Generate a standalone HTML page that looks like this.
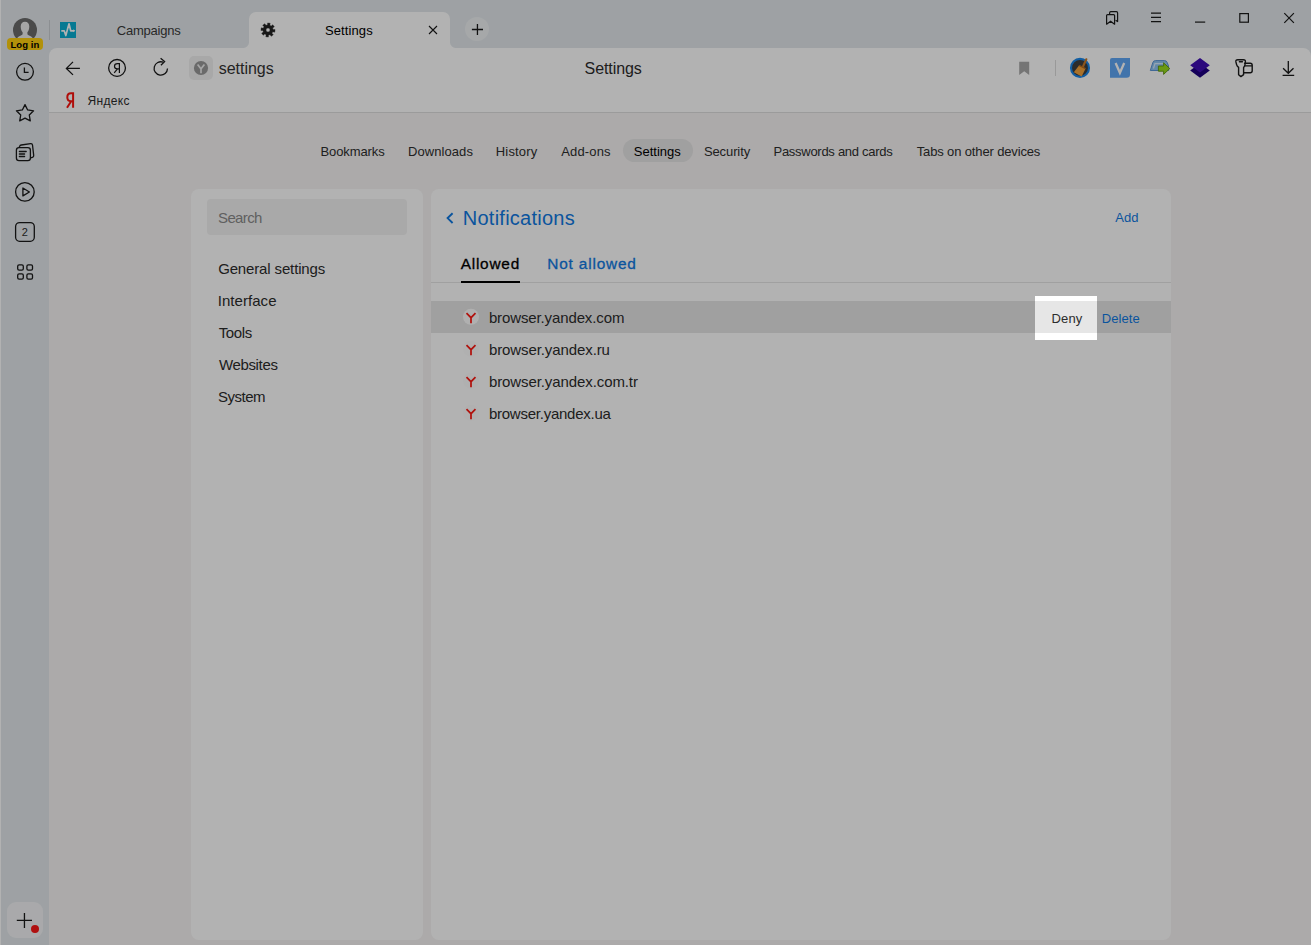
<!DOCTYPE html>
<html><head><meta charset="utf-8"><title>Settings</title>
<style>
*{box-sizing:border-box;margin:0;padding:0}
html,body{width:1311px;height:945px;overflow:hidden}
body{position:relative;background:#e2e7eb;font-family:"Liberation Sans",sans-serif;}
.a{position:absolute}
.t{position:absolute;white-space:nowrap;line-height:1;}
svg{position:absolute;overflow:visible}
#edge{left:0;top:0;width:1px;height:945px;background:#fff}
#toolbar{left:49px;top:48px;width:1262px;height:65px;background:#fff;border-radius:8px 8px 0 0;border-bottom:1px solid #dedede}
#page{left:49px;top:113px;width:1262px;height:832px;background:#f6f4f4}
#atab{left:249px;top:12px;width:201px;height:37px;background:#fff;border-radius:7px 7px 0 0}
.inv{width:6px;height:6px;top:42px}
#invl{left:243px;background:radial-gradient(circle at 0 0,rgba(255,255,255,0) 5.5px,#fff 6.5px)}
#invr{left:450px;background:radial-gradient(circle at 100% 0,rgba(255,255,255,0) 5.5px,#fff 6.5px)}
#tabsep{left:49px;top:20px;width:1px;height:20px;background:#c9cdd1}
#newtab{left:465px;top:17px;width:24px;height:24px;border-radius:12px;background:#eef1f3}
#lpanel{left:191px;top:189px;width:232px;height:751px;background:#fff;border-radius:8px}
#rpanel{left:431px;top:189px;width:740px;height:751px;background:#fff;border-radius:8px}
#search{left:207px;top:199px;width:200px;height:36px;background:#f2f2f2;border-radius:4px}
#pill{left:623px;top:139px;width:70px;height:23px;border-radius:12px;background:#e6e5e5}
#sepline{left:431px;top:282px;width:740px;height:1px;background:#e6e6e6}
#uline{left:461px;top:281px;width:59px;height:2px;background:#000}
#row1{left:431px;top:301px;width:740px;height:32px;background:#e6e6e6}
#plusbtn{left:7px;top:902px;width:36px;height:36px;border-radius:9px;background:#f2f3f5}
#reddot{left:30.7px;top:924.9px;width:8.4px;height:8.4px;border-radius:50%;background:#fb1717}
#loginpill{left:7px;top:38px;width:36px;height:12px;border-radius:4px;background:#ffd00f}
#sitebox{left:189px;top:56px;width:24px;height:24px;border-radius:5px;background:#f1f1f1}
#tbsep{left:1055px;top:60px;width:1px;height:16px;background:#dcdcdc}
#dim{left:1035px;top:296px;width:62px;height:44px;box-shadow:0 0 0 3000px rgba(0,0,0,0.3);z-index:50;pointer-events:none}
</style></head><body>
<div class="a" id="edge"></div>
<div class="a" id="tabsep"></div>
<div class="a" id="atab"></div><div class="a inv" id="invl"></div><div class="a inv" id="invr"></div>
<div class="a" id="newtab"></div>
<div class="a" id="toolbar"></div>
<div class="a" id="page"></div>
<div class="a" id="pill"></div>
<div class="a" id="lpanel"></div>
<div class="a" id="rpanel"></div>
<div class="a" id="search"></div>
<div class="a" id="sepline"></div>
<div class="a" id="row1"></div>
<div class="a" id="uline"></div>
<div class="a" id="plusbtn"></div>
<div class="a" id="reddot"></div>
<div class="a" id="sitebox"></div>
<div class="a" id="tbsep"></div>
<svg class="a" style="left:0;top:0" width="1311" height="945" viewBox="0 0 1311 945" fill="none">
<defs><clipPath id="avc"><circle cx="25" cy="30" r="12"/></clipPath></defs>
<circle cx="25" cy="30" r="12" fill="#6a6a6a"/>
<g clip-path="url(#avc)" fill="#ececec"><path d="M25 21.7C27.6 21.7 29.3 23.6 29.3 26.4C29.3 29 28.4 31 27.4 32.2V34.2C27.4 35.2 32.6 36 33.6 39.5H16.4C17.4 36 22.6 35.2 22.6 34.2V32.2C21.6 31 20.7 29 20.7 26.4C20.7 23.6 22.4 21.7 25 21.7Z"/></g>
<rect x="60" y="22" width="16" height="16" fill="#0baed1"/>
<path d="M61.3 30.8H64.2L65.8 35.6L69 23.8L70.7 30.8H74.2" stroke="#fff" stroke-width="1.7" stroke-linejoin="round"/><path d="M73.3 29.3L75.3 30.8L73.3 32.3Z" fill="#fff"/>
<path d="M267.46 24.93 L267.61 22.91 L270.20 23.25 L269.82 25.24 L271.21 26.03 L272.74 24.71 L274.33 26.78 L272.66 27.92 L273.07 29.46 L275.09 29.61 L274.75 32.20 L272.76 31.82 L271.97 33.21 L273.29 34.74 L271.22 36.33 L270.08 34.66 L268.54 35.07 L268.39 37.09 L265.80 36.75 L266.18 34.76 L264.79 33.97 L263.26 35.29 L261.67 33.22 L263.34 32.08 L262.93 30.54 L260.91 30.39 L261.25 27.80 L263.24 28.18 L264.03 26.79 L262.71 25.26 L264.78 23.67 L265.92 25.34Z M266.00 30.00 a2.0 2.0 0 1 0 4.0 0 a2.0 2.0 0 1 0 -4.0 0Z" fill="#222" fill-rule="evenodd" stroke="#222" stroke-width="0.35" stroke-linejoin="round"/>
<path d="M429 26L437 34M437 26L429 34" stroke="#1a1a1a" stroke-width="1.1"/>
<path d="M471.9 29.5H483M477.45 23.9V35" stroke="#1a1a1a" stroke-width="1.3"/>
<path d="M1109.6 14.6V12.9Q1109.6 11.7 1110.8 11.7H1116.4Q1117.6 11.7 1117.6 12.9V21.6L1115.6 20.2" stroke="#1a1a1a" stroke-width="1.2" stroke-linejoin="round"/>
<path d="M1106.6 15.6Q1106.6 14.6 1107.6 14.6H1113.6Q1114.6 14.6 1114.6 15.6V24.2L1110.6 21.2L1106.6 24.2Z" stroke="#1a1a1a" stroke-width="1.2" stroke-linejoin="round"/>
<path d="M1151 13.1H1161M1151 17.4H1161M1151 21.6H1161" stroke="#1a1a1a" stroke-width="1.2"/>
<path d="M1195 22.1H1205.2" stroke="#1a1a1a" stroke-width="1.2"/>
<rect x="1239.8" y="13.6" width="8.6" height="8.6" stroke="#1a1a1a" stroke-width="1.2"/>
<path d="M1284.3 13.2L1293.9 22.8M1293.9 13.2L1284.3 22.8" stroke="#1a1a1a" stroke-width="1.2"/>
<circle cx="25" cy="71.8" r="8.4" stroke="#1a1a1a" stroke-width="1.3"/><path d="M24.4 67.6V72.4H28.6" stroke="#1a1a1a" stroke-width="1.3"/>
<path d="M25.00 104.60 L27.65 109.96 L33.56 110.82 L29.28 114.99 L30.29 120.88 L25.00 118.10 L19.71 120.88 L20.72 114.99 L16.44 110.82 L22.35 109.96Z" stroke="#1a1a1a" stroke-width="1.3" stroke-linejoin="round"/>
<g stroke="#1a1a1a" stroke-width="1.3" stroke-linejoin="round" stroke-linecap="round"><path d="M19.2 147.3L19.6 146.4Q20 145.2 21.3 145L30.6 143.6Q32.3 143.4 32.5 145L33.7 155.3Q33.9 156.9 32.4 157.3L30.6 157.8"/><rect x="16.4" y="147.7" width="14" height="13" rx="2.6"/><path d="M19.4 151.5H26.2M19.4 154H24.6M19.4 156.5H24.6"/></g>
<circle cx="24.9" cy="191.9" r="9.3" stroke="#1a1a1a" stroke-width="1.3"/><path d="M22.9 188V195.9L29.4 191.95Z" stroke="#1a1a1a" stroke-width="1.3" stroke-linejoin="round"/>
<rect x="15.6" y="222.6" width="18.7" height="18.7" rx="4" stroke="#1a1a1a" stroke-width="1.3"/>
<rect x="17.7" y="264.8" width="5.6" height="5.3" rx="1.4" stroke="#1a1a1a" stroke-width="1.3"/>
<rect x="17.7" y="273.9" width="5.6" height="5.3" rx="1.4" stroke="#1a1a1a" stroke-width="1.3"/>
<rect x="26.9" y="264.8" width="5.6" height="5.3" rx="1.4" stroke="#1a1a1a" stroke-width="1.3"/>
<rect x="26.9" y="273.9" width="5.6" height="5.3" rx="1.4" stroke="#1a1a1a" stroke-width="1.3"/>
<path d="M16.8 920.4H32M24.45 913V928" stroke="#1a1a1a" stroke-width="1.3"/>
<path d="M79.9 68.4H66.6M73 61.9L66.4 68.4L73 74.9" stroke="#1a1a1a" stroke-width="1.3" stroke-linejoin="miter"/>
<circle cx="117.05" cy="67.9" r="8.4" stroke="#1a1a1a" stroke-width="1.3"/>
<path d="M119.4 63V72.9M119.4 63.6H117.5Q114.5 63.6 114.5 66.2Q114.5 68.8 117.5 68.8H119.4M117.5 68.8L114.2 72.9" stroke="#1a1a1a" stroke-width="1.2"/>
<path d="M167.5 68.6A6.7 6.7 0 1 1 163.2 62.2" stroke="#1a1a1a" stroke-width="1.3"/><path d="M160.6 58.2L164.6 61.6L160.9 65.3" stroke="#1a1a1a" stroke-width="1.3" stroke-linejoin="miter"/>
<circle cx="201" cy="68" r="7.1" fill="#999"/><path d="M197.6 64.4L201 68.8L204.4 64.4M201 68.6V73.2" stroke="#ececec" stroke-width="1.7"/>
<path d="M1019.2 61.7H1029.2V75L1024.2 71.2L1019.2 75Z" fill="#a8a8a8"/>
<circle cx="1080" cy="67.9" r="9" fill="#3f3f3f" stroke="#1a86e8" stroke-width="2.1"/>
<path d="M1086.3 59.3L1083 66.6" stroke="#c87a2a" stroke-width="2.2" stroke-linecap="round"/><path d="M1079.2 65.2L1085.6 68.4L1081.6 76.4L1073.8 72.2Z" fill="#f3a23c"/><path d="M1079 65.4L1085.4 68.6" stroke="#b56a1e" stroke-width="1.2"/>
<path d="M1112 58H1130V74.5Q1130 77.8 1126.6 77.8H1110V60Q1110 58 1112 58Z" fill="#5fa6f5"/>
<path d="M1115.6 63L1119.9 72.8L1124.2 63" stroke="#fff" stroke-width="2.3" stroke-linejoin="miter"/>
<path d="M1150.3 70.5L1152.8 62.6Q1153.4 60.6 1155.6 60.6H1164.5Q1166.5 60.6 1167.2 62.4L1168.5 66V70.5Z" fill="#8fc4f2" stroke="#5c96d6" stroke-width="1"/>
<path d="M1153.5 68.5L1155 63.6H1164.8" stroke="#d7ecff" stroke-width="1.2"/>
<path d="M1158.4 66H1163.6V62.8L1169.8 68.6L1163.6 74.4V71.2H1158.4Z" fill="#98dc1c" stroke="#5f9410" stroke-width="0.9" stroke-linejoin="round"/>
<path d="M1200 63.2L1209.8 70.5L1200 77.8L1190.2 70.5Z" fill="#1f0081"/>
<path d="M1200 57.9L1209.8 65.2L1200 72.5L1190.2 65.2Z" fill="#400eb3"/>
<g stroke="#1a1a1a" stroke-width="1.4" stroke-linejoin="round" stroke-linecap="round"><path d="M1244.6 63.2H1250.2Q1252.2 63.2 1252.2 65.2V70.8Q1252.2 72.8 1250.2 72.8H1244.2M1245.4 65.9H1252"/><path d="M1237.8 59.7H1243.4Q1245.7 59.7 1245.4 61.9L1245 64.6Q1244.8 66.2 1243.6 67.4V74.6L1240.9 76.6L1238.6 74.8V67.4Q1237 66.2 1236.6 64.6L1235.9 61.9Q1235.5 59.7 1237.8 59.7Z"/><path d="M1239.4 61.8H1242.4"/></g>
<path d="M1288.3 60.9V73M1283.1 68.2L1288.3 73.3L1293.5 68.2M1282.6 75.4H1294.2" stroke="#1a1a1a" stroke-width="1.3"/>
<path d="M73.1 92.3V107.8M73.1 93.2H71Q67.3 93.2 67.3 97.3Q67.3 101.2 71 101.2H73.1M71.2 101.2L67 107.8" stroke="#fb140e" stroke-width="2" stroke-linejoin="miter"/>
<path d="M452.6 213.2L447.6 218.1L452.6 223" stroke="#0f79e2" stroke-width="1.9"/>
<circle cx="471" cy="316.8" r="8" fill="#fdfdfd"/>
<path d="M466.5 313.2L471 317.7L475.5 313.2M471 317.3V323.3" stroke="#fc1a14" stroke-width="1.75"/>
<circle cx="471" cy="348.8" r="8" fill="#fdfdfd"/>
<path d="M466.5 345.2L471 349.7L475.5 345.2M471 349.3V355.3" stroke="#fc1a14" stroke-width="1.75"/>
<circle cx="471" cy="380.8" r="8" fill="#fdfdfd"/>
<path d="M466.5 377.2L471 381.7L475.5 377.2M471 381.3V387.3" stroke="#fc1a14" stroke-width="1.75"/>
<circle cx="471" cy="412.8" r="8" fill="#fdfdfd"/>
<path d="M466.5 409.2L471 413.7L475.5 409.2M471 413.3V419.3" stroke="#fc1a14" stroke-width="1.75"/>
</svg>
<div class="a" id="loginpill"></div>
<span class="t" id="t_login" style="left:10.43px;top:39.66px;font-size:9.5px;color:#000;letter-spacing:0.075px;font-weight:bold;">Log in</span>
<span class="t" id="t_camp" style="left:116.85px;top:23.80px;font-size:13px;color:#3a3a3a;letter-spacing:-0.232px;">Campaigns</span>
<span class="t" id="t_settab" style="left:324.92px;top:23.80px;font-size:13px;color:#000;letter-spacing:0.111px;">Settings</span>
<span class="t" id="t_url" style="left:218.78px;top:61.26px;font-size:16px;color:#333;letter-spacing:-0.026px;">settings</span>
<span class="t" id="t_title" style="left:584.57px;top:61.46px;font-size:16px;color:#2c2c2c;letter-spacing:-0.072px;">Settings</span>
<span class="t" id="t_ya" style="left:87.57px;top:95.04px;font-size:12px;color:#2c2c2c;letter-spacing:0.320px;">Яндекс</span>
<span class="t" id="n_book" style="left:320.49px;top:144.80px;font-size:13px;color:#2e2e2e;letter-spacing:-0.092px;">Bookmarks</span>
<span class="t" id="n_down" style="left:407.92px;top:144.80px;font-size:13px;color:#2e2e2e;letter-spacing:0.082px;">Downloads</span>
<span class="t" id="n_hist" style="left:495.85px;top:144.80px;font-size:13px;color:#2e2e2e;letter-spacing:0.142px;">History</span>
<span class="t" id="n_add" style="left:561.14px;top:144.80px;font-size:13px;color:#2e2e2e;letter-spacing:0.177px;">Add-ons</span>
<span class="t" id="n_set" style="left:633.81px;top:144.80px;font-size:13px;color:#000;letter-spacing:0.010px;">Settings</span>
<span class="t" id="n_sec" style="left:703.92px;top:144.80px;font-size:13px;color:#2e2e2e;letter-spacing:-0.101px;">Security</span>
<span class="t" id="n_pass" style="left:773.51px;top:144.80px;font-size:13px;color:#2e2e2e;letter-spacing:-0.280px;">Passwords and cards</span>
<span class="t" id="n_tabs" style="left:916.77px;top:144.80px;font-size:13px;color:#2e2e2e;letter-spacing:-0.143px;">Tabs on other devices</span>
<span class="t" id="s_search" style="left:218.01px;top:209.80px;font-size:15px;color:#8a8a8a;letter-spacing:-0.615px;">Search</span>
<span class="t" id="m_gen" style="left:218.14px;top:260.80px;font-size:15px;color:#2c2c2c;letter-spacing:-0.138px;">General settings</span>
<span class="t" id="m_int" style="left:217.71px;top:292.80px;font-size:15px;color:#2c2c2c;letter-spacing:0.056px;">Interface</span>
<span class="t" id="m_tools" style="left:218.73px;top:324.80px;font-size:15px;color:#2c2c2c;letter-spacing:-0.390px;">Tools</span>
<span class="t" id="m_web" style="left:218.92px;top:356.80px;font-size:15px;color:#2c2c2c;letter-spacing:-0.342px;">Websites</span>
<span class="t" id="m_sys" style="left:217.95px;top:388.80px;font-size:15px;color:#2c2c2c;letter-spacing:-0.481px;">System</span>
<span class="t" id="h_notif" style="left:462.83px;top:207.97px;font-size:20px;color:#0f79e2;letter-spacing:0.239px;">Notifications</span>
<span class="t" id="h_allowed" style="left:460.68px;top:255.66px;font-size:15.4px;color:#000;letter-spacing:0.776px;-webkit-text-stroke:0.3px currentColor;">Allowed</span>
<span class="t" id="h_notallowed" style="left:547.22px;top:255.66px;font-size:15.4px;color:#0f79e2;letter-spacing:0.829px;-webkit-text-stroke:0.3px currentColor;">Not allowed</span>
<span class="t" id="h_add" style="left:1115.15px;top:210.50px;font-size:13px;color:#0f79e2;letter-spacing:0.112px;">Add</span>
<span class="t" id="r1" style="left:488.89px;top:309.80px;font-size:15px;color:#2c2c2c;letter-spacing:-0.121px;">browser.yandex.com</span>
<span class="t" id="r2" style="left:488.89px;top:341.80px;font-size:15px;color:#2c2c2c;letter-spacing:-0.092px;">browser.yandex.ru</span>
<span class="t" id="r3" style="left:488.89px;top:373.80px;font-size:15px;color:#2c2c2c;letter-spacing:-0.092px;">browser.yandex.com.tr</span>
<span class="t" id="r4" style="left:488.89px;top:405.80px;font-size:15px;color:#2c2c2c;letter-spacing:-0.240px;">browser.yandex.ua</span>
<span class="t" id="b_deny" style="left:1051.51px;top:312.00px;font-size:13px;color:#2c2c2c;letter-spacing:0.149px;">Deny</span>
<span class="t" id="b_del" style="left:1101.71px;top:312.00px;font-size:13px;color:#0f79e2;letter-spacing:0.075px;">Delete</span>
<span class="t" id="i_two" style="left:21.66px;top:226.89px;font-size:11px;color:#2c2c2c;letter-spacing:0.000px;">2</span>
<div class="a" id="dim"></div>
</body></html>
